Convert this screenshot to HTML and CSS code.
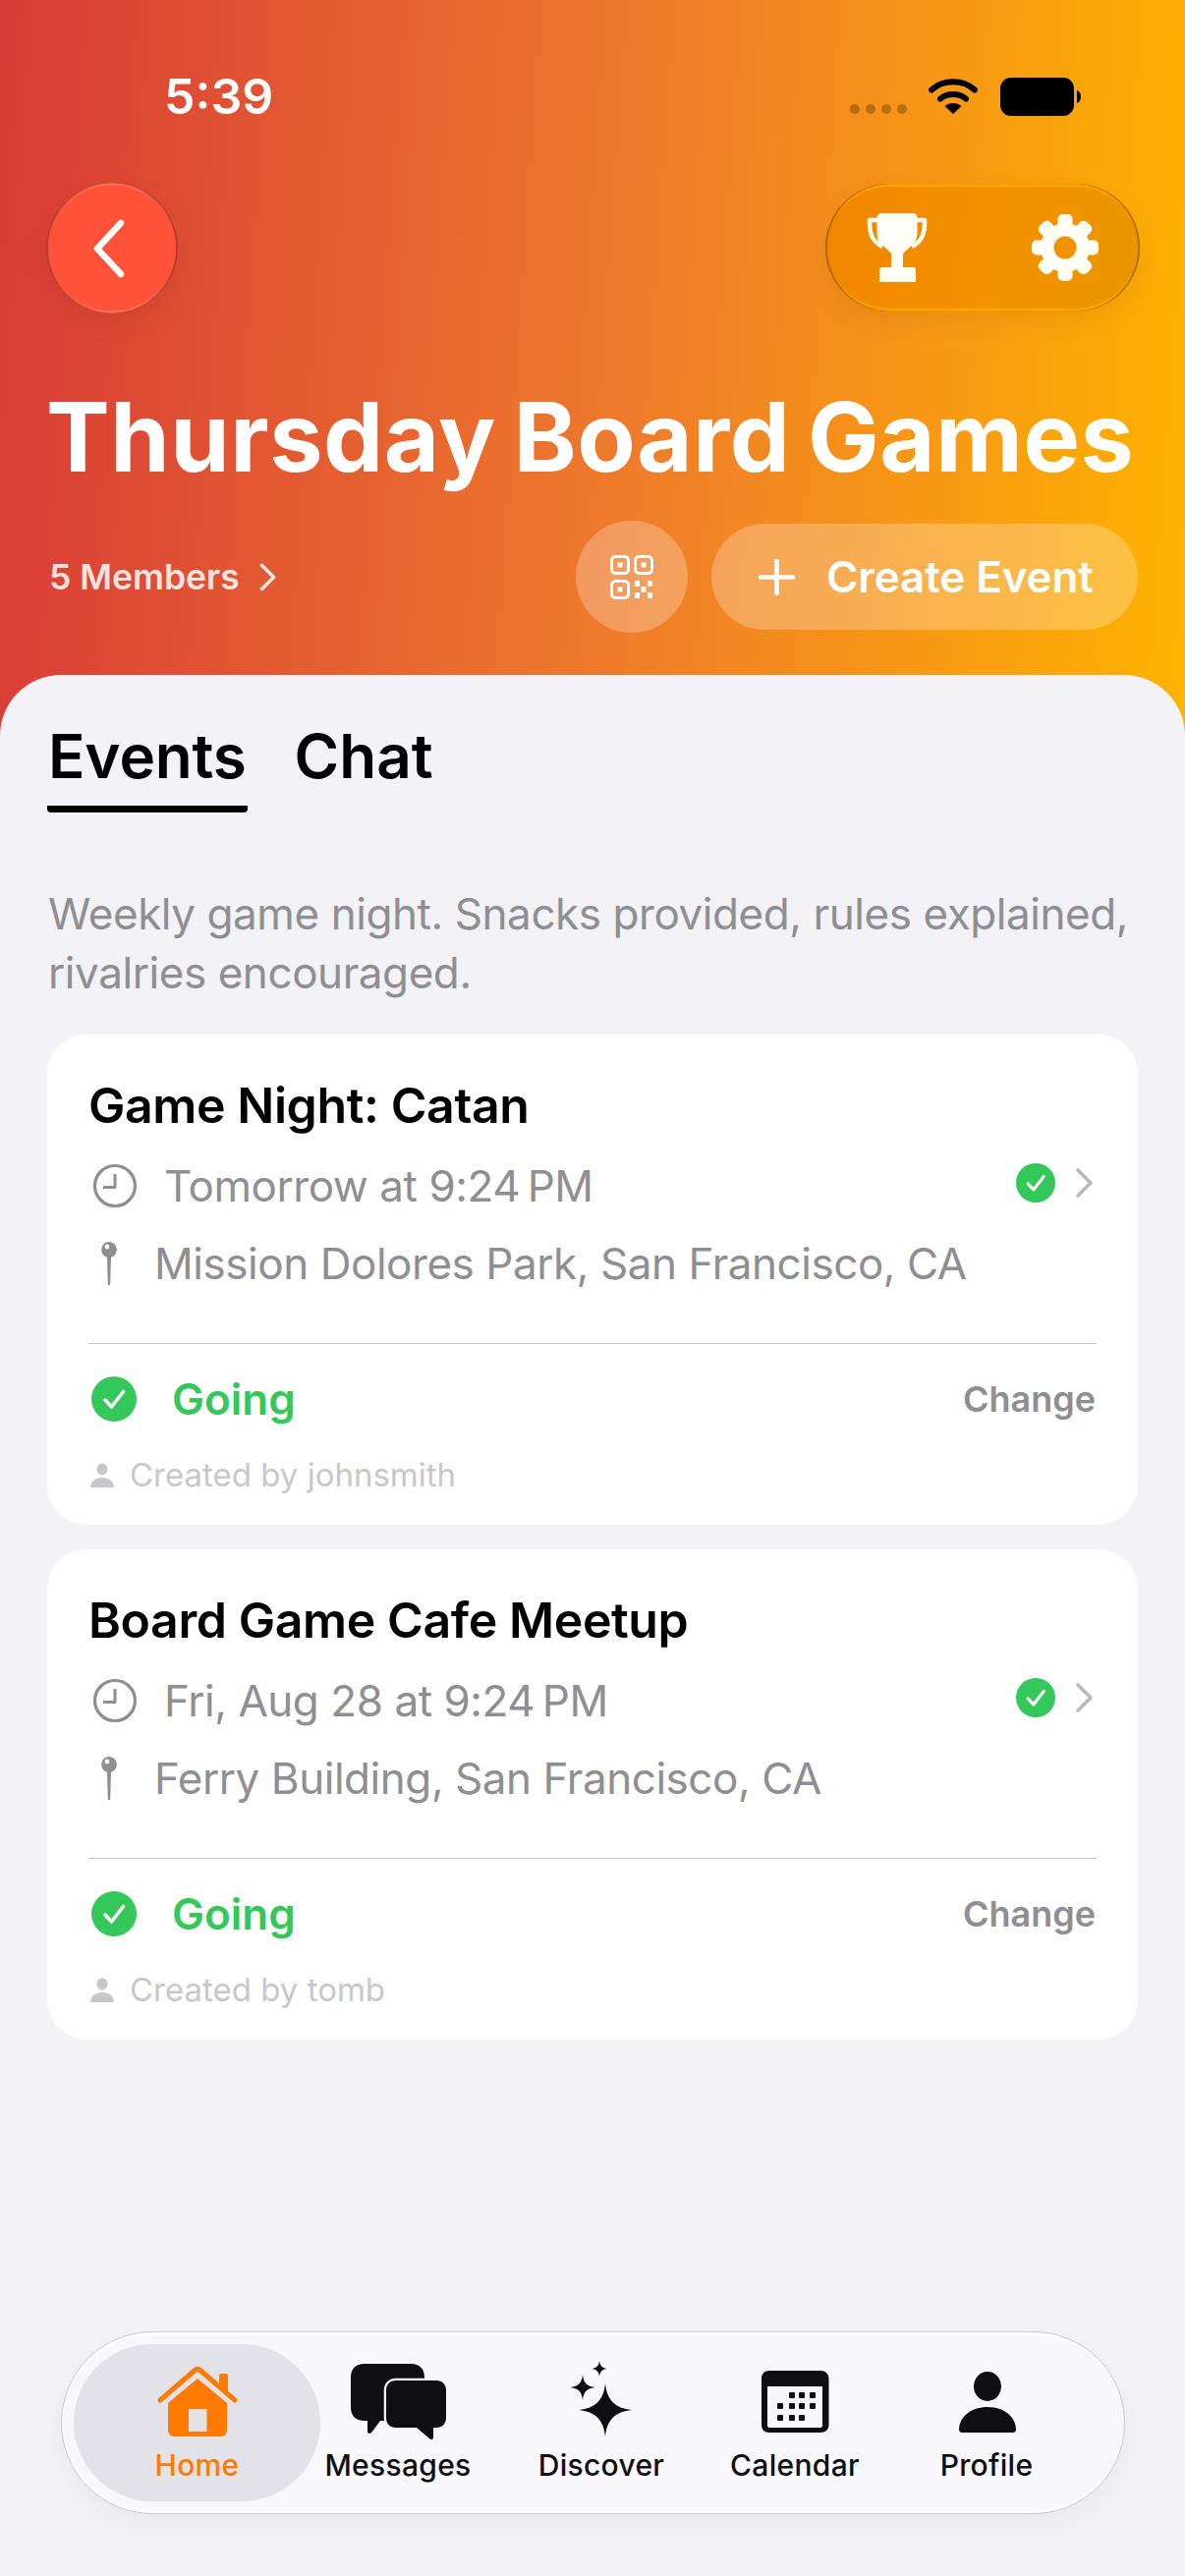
FILE: index.html
```html
<!DOCTYPE html>
<html lang="en">
<head>
<meta charset="utf-8">
<title>Thursday Board Games</title>
<link rel="stylesheet" href="styles.css">
</head>
<body>
<svg class="defs" width="0" height="0" aria-hidden="true">
  <symbol id="clock" viewBox="0 0 46 46"><circle cx="23" cy="23" r="20.500" fill="none" stroke="currentColor" stroke-width="3.200"/><path d="M23 11v13.500H11" fill="none" stroke="currentColor" stroke-width="3" stroke-linejoin="round"/></symbol>
  <symbol id="pin" viewBox="0 0 18 46"><path d="M9 1a8 8 0 0 1 2 15.700L10.200 44a1.200 1.200 0 0 1-2.400 0L7 16.700A8 8 0 0 1 9 1z" fill="currentColor"/><circle cx="7" cy="6" r="2.400" fill="#fff"/></symbol>
  <symbol id="check" viewBox="0 0 46 46"><circle cx="23" cy="23" r="23" fill="#34c759"/><path d="M14 24l6.500 7L32.500 15.500" fill="none" stroke="#fff" stroke-width="3.600" stroke-linecap="round" stroke-linejoin="round"/></symbol>
  <symbol id="chev" viewBox="0 0 20 32"><path d="M3 3l13 13L3 29" fill="none" stroke="currentColor" stroke-width="3.600" stroke-linecap="round" stroke-linejoin="round"/></symbol>
  <symbol id="user" viewBox="0 0 24 25"><ellipse cx="12" cy="6.500" rx="5.500" ry="6"/><path d="M0 25c0-6 5-10 12-10s12 4 12 10z"/></symbol>
</svg>
<main class="screen">
  <header class="hero">
    <div class="status">
      <span class="time">5:39</span>
      <div class="status-icons">
        <svg class="dots" width="58" height="10" viewBox="0 0 58 10"><g fill="#000" fill-opacity=".25"><circle cx="5" cy="5" r="5"/><circle cx="21" cy="5" r="5"/><circle cx="37" cy="5" r="5"/><circle cx="53" cy="5" r="5"/></g></svg>
        <svg class="wifi" width="50" height="37" viewBox="0 0 50 37"><path d="M3 12.500C15 1.500 35 1.500 47 12.500M12 21.500C19 15.500 31 15.500 38 21.500" fill="none" stroke="#000" stroke-width="6" stroke-linecap="round"/><path d="M25 37l-8.500-8c5-4 12-4 17 0z" fill="#000"/></svg>
        <svg class="battery" width="82" height="39" viewBox="0 0 82 39"><rect width="75" height="39" rx="11"/><path d="M78 13c3 1 4 4 4 6.500s-1 5.500-4 6.500z"/></svg>
      </div>
    </div>
    <nav class="nav">
      <button class="back" aria-label="Back"><svg width="34" height="60" viewBox="0 0 34 60"><path d="M29 4L5 30l24 26" fill="none" stroke="#fff" stroke-width="6.500" stroke-linecap="round" stroke-linejoin="round"/></svg></button>
      <div class="pill">
        <svg width="62" height="70" viewBox="0 0 62 70"><path d="M15 0h32c3 0 4.500 2 4.500 5v14c0 9-3 12-8 16l-6.500 6v14h10c3 0 3 2 3 4v11H13V59c0-2 1-4 3-4h9V41l-6-6c-6-4-8.500-7-8.500-16V5C10.500 2 12 0 15 0z" fill="#fffff6"/><path d="M11 7H3c-.5 14 3 22 13 27M51 7h8c.5 14-3 22-13 27" fill="none" stroke="#fffff6" stroke-width="4.500" stroke-linejoin="round"/></svg>
        <svg width="68" height="68" viewBox="-34 -34 68 68"><mask id="hole"><rect x="-34" y="-34" width="68" height="68" fill="#fff"/><circle r="11.500" fill="#000"/></mask><g fill="#fffff6" mask="url(#hole)"><circle r="25"/><rect x="-7.500" y="-34" width="15" height="68" rx="5"/><rect x="-7.500" y="-34" width="15" height="68" rx="5" transform="rotate(45)"/><rect x="-7.500" y="-34" width="15" height="68" rx="5" transform="rotate(90)"/><rect x="-7.500" y="-34" width="15" height="68" rx="5" transform="rotate(135)"/></g></svg>
      </div>
    </nav>
    <h1 class="title">Thursday Board Games</h1>
    <div class="actions">
      <a class="members">5 Members<svg width="17" height="29" viewBox="0 0 17 29"><path d="M2.500 2.500L14.500 14.500 2.500 26.500" fill="none" stroke="currentColor" stroke-width="3.600" stroke-linecap="round" stroke-linejoin="round"/></svg></a>
      <button class="qr" aria-label="QR code"><svg width="44" height="45" viewBox="0 0 44 45"><g fill="none" stroke="#fff" stroke-width="3"><rect x="1.500" y="1.500" width="17" height="17" rx="4"/><rect x="25.500" y="1.500" width="17" height="17" rx="4"/><rect x="1.500" y="26.500" width="17" height="17" rx="4"/></g><g fill="#fff"><rect x="7.500" y="7.500" width="5" height="5"/><rect x="31.500" y="7.500" width="5" height="5"/><rect x="7.500" y="32.500" width="5" height="5"/><rect x="25" y="26" width="5" height="6"/><rect x="38" y="26" width="5" height="6"/><rect x="31.500" y="32" width="5" height="6"/><rect x="25" y="38" width="5" height="6"/><rect x="38" y="38" width="5" height="6"/></g></svg></button>
      <button class="create"><svg width="37" height="37" viewBox="0 0 37 37"><path d="M18.500 2v33M2 18.500h33" fill="none" stroke="#fff" stroke-width="4.500" stroke-linecap="round"/></svg><span>Create Event</span></button>
    </div>
  </header>
  <section class="sheet">
    <div class="tabs">
      <div class="tab tab-on">Events</div>
      <div class="tab">Chat</div>
    </div>
    <p class="desc">Weekly game night. Snacks provided, rules explained, rivalries encouraged.</p>
    <div class="cards">
      <article class="card">
        <h2 class="card-title">Game Night: Catan</h2>
        <div class="row row-time">
          <svg class="clock"><use href="#clock"/></svg>
          <span class="meta">Tomorrow at 9:24&#8239;PM</span>
          <svg class="mini-check"><use href="#check"/></svg>
          <svg class="mini-chev"><use href="#chev"/></svg>
        </div>
        <div class="row row-loc">
          <svg class="pin"><use href="#pin"/></svg>
          <span class="meta">Mission Dolores Park, San Francisco, CA</span>
        </div>
        <hr class="rule">
        <div class="row row-rsvp">
          <svg class="big-check"><use href="#check"/></svg>
          <span class="going">Going</span>
          <span class="change">Change</span>
        </div>
        <div class="row row-by"><svg class="user"><use href="#user"/></svg><span>Created by johnsmith</span></div>
      </article>
      <article class="card">
        <h2 class="card-title">Board Game Cafe Meetup</h2>
        <div class="row row-time">
          <svg class="clock"><use href="#clock"/></svg>
          <span class="meta">Fri, Aug 28 at 9:24&#8239;PM</span>
          <svg class="mini-check"><use href="#check"/></svg>
          <svg class="mini-chev"><use href="#chev"/></svg>
        </div>
        <div class="row row-loc">
          <svg class="pin"><use href="#pin"/></svg>
          <span class="meta">Ferry Building, San Francisco, CA</span>
        </div>
        <hr class="rule">
        <div class="row row-rsvp">
          <svg class="big-check"><use href="#check"/></svg>
          <span class="going">Going</span>
          <span class="change">Change</span>
        </div>
        <div class="row row-by"><svg class="user"><use href="#user"/></svg><span>Created by tomb</span></div>
      </article>
    </div>
  </section>
  <nav class="tabbar">
    <a class="item item-on">
      <svg class="ico" viewBox="0 0 100 80"><g transform="translate(9 4)"><path d="M41 13L71 38v27c0 4-2 7-6 7H17c-4 0-6-3-6-7V38zM32 44v23h18.500V44z" fill="#ff7a00" fill-rule="evenodd"/><path d="M63 20V10c0-1 .5-2 2-2h5c1.500 0 2 1 2 2v19z" fill="#ff7a00"/><path d="M3 35L39 4c1.500-1 2.500-1 4 0l36 31" fill="none" stroke="#ff7a00" stroke-width="5" stroke-linecap="round" stroke-linejoin="round"/></g></svg>
      <span>Home</span>
    </a>
    <a class="item">
      <svg class="ico" viewBox="0 0 100 80"><g transform="translate(2 2)"><path d="M14 0h47c9 0 14 5 14 14v30c0 9-5 14-14 14H30L21 70c-2 2-4 1-4-2V58h-3C5 58 0 53 0 44V14C0 5 5 0 14 0z" fill="#0f0f11"/><path d="M46 17h41c6 0 10 4 10 10v28c0 6-4 10-10 10h-3v10c0 2-2 3-4 1L67 65H46c-6 0-10-4-10-10V27c0-6 4-10 10-10z" fill="#0f0f11" stroke="#f7f7fc" stroke-width="4.500" paint-order="stroke"/></g></svg>
      <span>Messages</span>
    </a>
    <a class="item">
      <svg class="ico" viewBox="0 0 100 80"><g fill="#0f0f11"><path d="M54 22c1.800 17 10 25.200 27 27-17 1.800-25.200 10-27 27-1.800-17-10-25.200-27-27 17-1.800 25.200-10 27-27z"/><path d="M31 13c.8 8.500 4.500 12.200 13 13-8.500.8-12.200 4.500-13 13-.8-8.500-4.500-12.200-13-13 8.500-.8 12.200-4.500 13-13z"/><path d="M48 -1c.5 5 3 7.500 8 8-5 .5-7.500 3-8 8-.5-5-3-7.500-8-8 5-.5 7.500-3 8-8z"/></g></svg>
      <span>Discover</span>
    </a>
    <a class="item">
      <svg class="ico" viewBox="0 0 100 80"><path d="M24 9h52c5 0 8.500 3.500 8.500 8v47c0 5-3.500 8-8.500 8H24c-5 0-8-3-8-8V17c0-4.500 3-8 8-8zm-2 16v40c0 1 1 2 2 2h52c1 0 2-1 2-2V25z" fill="#0f0f11" fill-rule="evenodd"/><g fill="#0f0f11"><rect x="44" y="31" width="6" height="6" rx="1"/><rect x="54" y="31" width="6" height="6" rx="1"/><rect x="65" y="31" width="6" height="6" rx="1"/><rect x="32" y="42" width="6" height="6" rx="1"/><rect x="44" y="42" width="6" height="6" rx="1"/><rect x="54" y="42" width="6" height="6" rx="1"/><rect x="65" y="42" width="6" height="6" rx="1"/><rect x="32" y="54" width="6" height="6" rx="1"/><rect x="44" y="54" width="6" height="6" rx="1"/><rect x="54" y="54" width="6" height="6" rx="1"/></g></svg>
      <span>Calendar</span>
    </a>
    <a class="item">
      <svg class="ico" viewBox="0 0 100 80"><g fill="#0f0f11"><ellipse cx="51" cy="25" rx="14" ry="15"/><path d="M22 68c1-13 13-22 29-22s28 9 29 22c0 3-1 4-4 4H26c-3 0-4-1-4-4z"/></g></svg>
      <span>Profile</span>
    </a>
  </nav>
</main>
</body>
</html>
```

FILE: styles.css
```css
* { box-sizing: border-box; }
html, body { margin: 0; padding: 0; }
body { font-family: Inter, "Noto Sans", "Liberation Sans", sans-serif; background: #f2f2f7; }
.defs { position: absolute; }
button { border: 0; padding: 0; font: inherit; color: inherit; background: none; }
.screen { position: relative; width: 1206px; height: 2622px; overflow: hidden; background: #f2f2f7; }

.hero { height: 760px; padding-top: 79px; background: linear-gradient(94deg, #d83a37 0%, #ee7a2c 52%, #ffb300 100%); color: #fff; }
.status { display: flex; justify-content: space-between; align-items: center; height: 39px; padding: 0 106px 0 167px; }
.time { font-size: 50px; font-weight: 600; line-height: 39px; }
.status-icons { display: flex; align-items: flex-start; height: 39px; }
.dots { margin: 27px 22px 0 0; }
.wifi { margin-right: 23px; }
.battery { display: block; }
.nav { display: flex; justify-content: space-between; align-items: flex-start; padding: 68px 46px 0 47px; }
.back { width: 134px; height: 133px; border-radius: 50%; background: #ff5238; display: flex; align-items: center; justify-content: center; padding-right: 6px; box-shadow: inset 1.500px 0 1px rgba(90,10,0,.55), inset -1.500px 0 1px rgba(90,10,0,.55), inset 0 2px 2px rgba(255,170,150,.5), inset 0 -2px 2px rgba(255,170,150,.5), 0 10px 24px rgba(120,40,20,.12); }
.pill { width: 320px; height: 130px; margin-top: 1px; border-radius: 65px; background: linear-gradient(100deg, #f18500, #f39200 55%, #ea9700); display: flex; align-items: center; padding: 0 42px; justify-content: space-between; box-shadow: inset 1.500px 0 1px rgba(100,40,0,.6), inset -1.500px 0 1px rgba(110,50,0,.6), inset 0 3px 2px #ffa800, inset 0 -3px 2px #ffa800, 0 10px 24px rgba(120,60,0,.1); }
.title { margin: 71px 0 0; padding-left: 47px; font-size: 97px; font-weight: 700; letter-spacing: .55px; word-spacing: -6px; line-height: 110px; white-space: nowrap; }
.actions { display: flex; align-items: center; margin-top: 30px; padding: 0 48px 0 50px; }
.members { display: flex; align-items: center; gap: 20px; margin-right: auto; font-size: 35.500px; font-weight: 600; color: rgba(255,255,255,.85); }
.qr { width: 114px; height: 114px; border-radius: 50%; background: rgba(255,255,255,.25); display: flex; align-items: center; justify-content: center; margin-right: 24px; }
.create { width: 434px; height: 108px; border-radius: 54px; background: rgba(255,255,255,.25); display: flex; align-items: center; padding-left: 48px; gap: 32px; font-size: 44px; font-weight: 600; letter-spacing: -.1px; color: #fff; }

.sheet { position: relative; margin-top: -73px; padding: 47px 48px 0; background: #f2f2f7; border-radius: 62px 62px 0 0; }
.tabs { display: flex; gap: 48px; }
.tab { font-size: 62px; font-weight: 600; line-height: 72px; height: 93px; color: #000; }
.tab-on { padding: 0 1px; border-bottom: 7px solid #000; border-radius: 0 0 4px 4px; letter-spacing: -.2px; }
.desc { margin: 73px 0 0; padding: 0 1px; font-size: 44px; letter-spacing: -.43px; line-height: 60px; color: #8e8e93; }
.cards { display: flex; flex-direction: column; gap: 25px; margin-top: 33px; }
.card { height: 499px; padding: 42px 42px 0; background: #fff; border-radius: 40px; }
.card-title { margin: 0; font-size: 50px; font-weight: 600; letter-spacing: -.4px; line-height: 60px; color: #000; }
.row { display: flex; align-items: center; }
.meta { font-size: 44px; letter-spacing: -.45px; color: #8e8e93; white-space: nowrap; }
.row-time { height: 46px; margin-top: 29px; padding: 0 2px 0 4px; }
.clock { width: 46px; height: 46px; color: #8e8e93; margin-right: 27px; flex: none; }
.mini-check { width: 40px; height: 40px; margin: 0 20px 6px auto; }
.mini-chev { width: 20px; height: 32px; margin-bottom: 6px; color: #b9b9bd; }
.row-loc { height: 46px; margin-top: 33px; padding-left: 12px; }
.pin { width: 18px; height: 46px; color: #8e8e93; margin-right: 37px; flex: none; }
.rule { height: 1px; margin: 58px 0 1px; border: 0; background: #c6c6c8; }
.row-rsvp { height: 46px; margin-top: 33px; padding-left: 3px; }
.big-check { width: 46px; height: 46px; margin-right: 36px; flex: none; }
.going { font-size: 44px; font-weight: 600; color: #34c759; }
.change { margin-left: auto; padding-right: 1px; font-size: 36px; font-weight: 600; color: #8e8e93; }
.row-by { height: 30px; margin-top: 39px; padding-left: 2px; font-size: 33px; color: #c7c7cc; }
.user { width: 24px; height: 25px; fill: #c7c7cc; margin-right: 16px; }

.tabbar { position: absolute; left: 62px; top: 2373px; width: 1083px; height: 186px; padding: 12px; display: grid; grid-template-columns: 251px 158px 256px 138px 252px; border-radius: 93px; background: #f7f7fc; border: 1.500px solid #c9c9ce; box-shadow: inset 0 3px 3px #fff, inset 0 -3px 3px #fff, 0 12px 30px rgba(0,0,0,.04); }
.item { height: 160px; display: flex; flex-direction: column; align-items: center; padding-top: 18px; font-size: 30px; font-weight: 500; line-height: 38px; letter-spacing: .3px; color: #0f0f11; }
.item-on { color: #ff7a00; background: #e2e2e8; border-radius: 80px; }
.ico { width: 100px; height: 80px; margin-bottom: 6px; overflow: visible; flex: none; }
```
